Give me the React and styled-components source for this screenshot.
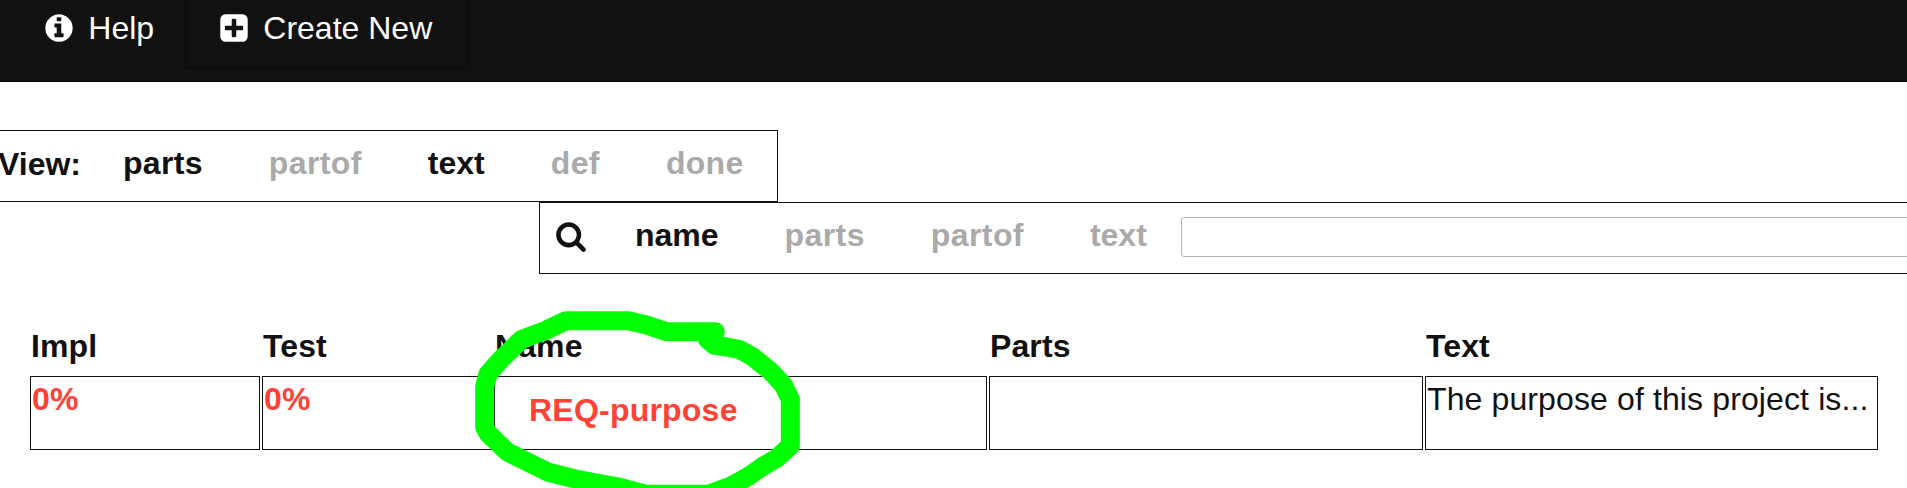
import React from "react";
import styled, { createGlobalStyle } from "styled-components";

const GlobalStyle = createGlobalStyle`
  * { box-sizing: border-box; }
  html, body { margin: 0; padding: 0; }
  body {
    width: 1907px;
    height: 488px;
    overflow: hidden;
    background: #fff;
    color: #111;
    font: 32px/42px "Liberation Sans", Arial, sans-serif;
  }
`;

const Page = styled.div`
  position: relative;
  width: 1907px;
  height: 488px;
  overflow: hidden;
`;

const NavBar = styled.nav`
  display: flex;
  align-items: flex-start;
  height: 82px;
  background: #111;
  border-bottom: 1px solid #0c0c0c;
  color: #fff;
`;

const NavButton = styled.div`
  display: flex;
  align-items: flex-start;
  width: ${(p) => p.$width}px;
  height: 69px;
  padding: 7px 0 0 ${(p) => p.$inset}px;
  border: 3px solid ${(p) => (p.$active ? "#0d0d0d" : "transparent")};
  border-top: 0;
  white-space: nowrap;
`;

const Icon = styled.svg`
  flex: none;
  width: 32px;
  height: 32px;
  margin-top: ${(p) => p.$top}px;
  margin-right: ${(p) => p.$gap}px;
  fill: currentColor;
`;

const Panel = styled.section`
  display: flex;
  align-items: flex-start;
  height: 72px;
  border: 1px solid #111;
  font-weight: bold;
  white-space: nowrap;
`;

const ViewPanel = styled(Panel)`
  width: 780px;
  margin: 48px 0 0 -2px;
  border-left: 0;
`;

const SearchPanel = styled(Panel)`
  width: 1400px;
  margin-left: 539px;
  padding-left: 15px;
`;

const PanelLabel = styled.span`
  flex: none;
  width: 92px;
  padding-top: 12px;
`;

const Toggle = styled.span`
  flex: none;
  padding: 11px 33px 0;
  color: ${(p) => (p.$on ? "#111" : "#aaa")};
  letter-spacing: ${(p) => p.$tracking || 0}px;
`;

const SearchInput = styled.input`
  flex: none;
  width: 800px;
  height: 40px;
  margin: 14px 0 0 1px;
  border: 1px solid #b4b4b4;
  border-radius: 3px;
  background: #fff;
  outline: none;
`;

const Grid = styled.div`
  display: grid;
  grid-template-columns: 230px 230px 493px 434px 453px;
  grid-template-rows: 49px 74px;
  column-gap: 2px;
  row-gap: 2px;
  margin: 51px 0 0 30px;
`;

const HeaderCell = styled.div`
  padding: 0 1px;
  font-weight: bold;
  letter-spacing: 0.1px;
`;

const Cell = styled.div`
  padding: 1px;
  border: 1px solid #111;
  letter-spacing: 0.12px;
  white-space: nowrap;
`;

const Percent = styled.span`
  color: #ff4136;
  font-weight: bold;
`;

const ReqLink = styled.a`
  display: block;
  padding: 11px 0 0 33px;
  color: #ff4136;
  font-weight: bold;
  letter-spacing: 0.22px;
`;

const Marker = styled.svg`
  position: absolute;
  left: 460px;
  top: 300px;
  width: 360px;
  height: 188px;
  fill: none;
  stroke: #0f0;
  stroke-width: 57;
  stroke-linecap: round;
  stroke-linejoin: round;
`;

const INFO =
  "M1152 1376v-160q0-14-9-23t-23-9h-96v-512q0-14-9-23t-23-9h-320q-14 0-23 9t-9 23v160q0 14 9 23t23 9h96v320h-96q-14 0-23 9t-9 23v160q0 14 9 23t23 9h448q14 0 23-9t9-23zm-128-896v-160q0-14-9-23t-23-9h-192q-14 0-23 9t-9 23v160q0 14 9 23t23 9h192q14 0 23-9t9-23zm640 416q0 209-103 385.5t-279.5 279.5-385.5 103-385.5-103-279.5-279.5-103-385.5 103-385.5 279.5-279.5 385.5-103 385.5 103 279.5 279.5 103 385.5z";
const PLUS =
  "M1408 960v-128q0-26-19-45t-45-19h-320v-320q0-26-19-45t-45-19h-128q-26 0-45 19t-19 45v320h-320q-26 0-45 19t-19 45v128q0 26 19 45t45 19h320v320q0 26 19 45t45 19h128q26 0 45-19t19-45v-320h320q26 0 45-19t19-45zm256-544v960q0 119-84.5 203.5t-203.5 84.5h-960q-119 0-203.5-84.5t-84.5-203.5v-960q0-119 84.5-203.5t203.5-84.5h960q119 0 203.5 84.5t84.5 203.5z";
const SEARCH =
  "M1216 832q0-185-131.5-316.5t-316.5-131.5-316.5 131.5-131.5 316.5 131.5 316.5 316.5 131.5 316.5-131.5 131.5-316.5zm512 832q0 52-38 90t-90 38q-54 0-90-38l-343-342q-179 124-399 124-143 0-273.5-55.5t-225-150-150-225-55.5-273.5 55.5-273.5 150-225 225-150 273.5-55.5 273.5 55.5 225 150 150 225 55.5 273.5q0 220-124 399l343 343q37 37 37 90z";

const VIEW_FIELDS = [
  { name: "parts", on: true, tracking: 0.3 },
  { name: "partof", on: false, tracking: 0.4 },
  { name: "text", on: true },
  { name: "def", on: false, tracking: 0.4 },
  { name: "done", on: false, tracking: 0.3 },
];

const SEARCH_FIELDS = [
  { name: "name", on: true },
  { name: "parts", on: false, tracking: 0.4 },
  { name: "partof", on: false, tracking: 0.4 },
  { name: "text", on: false },
];

const COLUMNS = ["Impl", "Test", "Name", "Parts", "Text"];

function Glyph({ d, top, gap }) {
  return (
    <Icon viewBox="0 0 1792 1792" $top={top} $gap={gap} aria-hidden="true">
      <path d={d} />
    </Icon>
  );
}

function Toggles({ fields }) {
  return fields.map((f) => (
    <Toggle key={f.name} $on={f.on} $tracking={f.tracking}>
      {f.name}
    </Toggle>
  ));
}

export default function App() {
  return (
    <Page>
      <GlobalStyle />
      <NavBar>
        <NavButton $width={184} $inset={39.7}>
          <Glyph d={INFO} top={4.7} gap={13.6} />
          Help
        </NavButton>
        <NavButton $active $width={285} $inset={30.7}>
          <Glyph d={PLUS} top={4.7} gap={13.6} />
          Create New
        </NavButton>
      </NavBar>

      <ViewPanel>
        <PanelLabel>View:</PanelLabel>
        <Toggles fields={VIEW_FIELDS} />
      </ViewPanel>

      <SearchPanel>
        <Glyph d={SEARCH} top={16.7} gap={15} />
        <Toggles fields={SEARCH_FIELDS} />
        <SearchInput aria-label="Search" />
      </SearchPanel>

      <Grid>
        {COLUMNS.map((c) => (
          <HeaderCell key={c}>{c}</HeaderCell>
        ))}
        <Cell><Percent>0%</Percent></Cell>
        <Cell><Percent>0%</Percent></Cell>
        <Cell><ReqLink>REQ-purpose</ReqLink></Cell>
        <Cell />
        <Cell>The purpose of this project is...</Cell>
      </Grid>

      <Marker viewBox="0 0 1080 564" aria-hidden="true">
        <path d="M766 95H620L560 75L505 62H318L255 92L185 118L123 178L84 222L74 260V382L84 400L142 456L265 517L350 538L480 562L560 583H745L815 557L862 531L910 498L950 475L991 437V298L970 255L932 214L880 172L840 149L800 141L762 135L742 118" />
      </Marker>
    </Page>
  );
}
